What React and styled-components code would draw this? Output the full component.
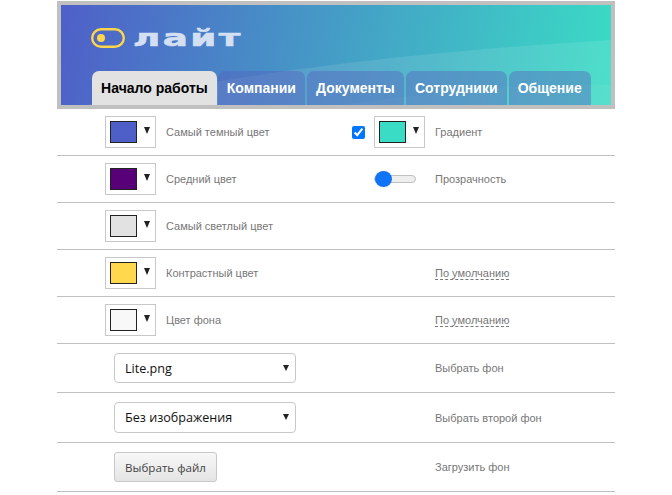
import React from 'react';
import styled, { createGlobalStyle } from 'styled-components';

const GlobalStyle = createGlobalStyle`
  html, body { margin: 0; padding: 0; background: #fff; }
  body { font-family: "Liberation Sans", Arial, sans-serif; }
`;

const Page = styled.div`
  width: 558px;
  margin: 1px auto 0;
`;

const Header = styled.header`
  position: relative;
  height: 100px;
  border: 4px solid #c0c0c0;
  background: linear-gradient(100deg, #4f5fc8 0%, #3adcc5 100%);
  display: flex;
  flex-direction: column;
  justify-content: space-between;
  overflow: hidden;
`;

const Waves = styled.svg`
  position: absolute;
  inset: 0;
  width: 100%;
  height: 100%;
`;

const Logo = styled.div`
  position: relative;
  display: flex;
  align-items: center;
  gap: 8px;
  padding: 23px 0 0 30px;
`;

const LogoText = styled.span`
  display: inline-block;
  font-family: "DejaVu Sans", sans-serif;
  font-weight: 700;
  font-size: 23px;
  line-height: 20px;
  letter-spacing: 1.5px;
  color: #d3dff2;
  -webkit-text-stroke: 0.6px #d3dff2;
  transform: scaleX(1.62);
  transform-origin: left center;
`;

const Tabs = styled.nav`
  position: relative;
  display: flex;
  gap: 2px;
  padding-left: 31px;
`;

const Tab = styled.div`
  height: 34px;
  padding: 0 9.1px;
  margin-right: ${p => (p.$active ? -1.2 : 0)}px;
  border-radius: 7px 7px 0 0;
  font-size: 14px;
  font-weight: 700;
  line-height: 34px;
  color: ${p => (p.$active ? '#000' : '#fff')};
  background: ${p => (p.$active ? '#e2e2e2' : 'rgba(86, 96, 190, 0.42)')};
`;

const Row = styled.div`
  display: grid;
  grid-template-columns: 295px 73px 1fr;
  align-items: center;
  height: ${p => p.$h || 46}px;
  border-bottom: 1px solid #c0c0c0;
`;

const Left = styled.div`
  display: flex;
  align-items: center;
  gap: 10px;
  padding-left: ${p => p.$inset || 48}px;
`;

const Middle = styled.div`
  display: flex;
  align-items: center;
  justify-content: space-between;
`;

const Label = styled.span`
  font-size: 11px;
  color: #777;
`;

const RightLabel = styled(Label)`
  margin-left: 10px;
`;

const DefaultLink = styled(RightLabel)`
  justify-self: start;
  border-bottom: 1px dashed #777;
  line-height: 12px;
`;

const Picker = styled.div`
  box-sizing: border-box;
  position: relative;
  width: 51px;
  height: 32px;
  border: 1px solid #c8c8c8;
  padding: 4px;
`;

const Swatch = styled.div`
  box-sizing: border-box;
  width: 27px;
  height: 22px;
  border: 1px solid #222;
  background: ${p => p.$color};
`;

const Arrow = styled.i`
  position: absolute;
  top: 10px;
  right: 5px;
  border-style: solid;
  border-width: 7px 3.5px 0;
  border-color: #222 transparent transparent;
`;

const Check = styled.input`
  width: 13px;
  height: 13px;
  margin: 0;
  accent-color: #0075ff;
`;

const Range = styled.input`
  appearance: none;
  width: 42px;
  height: 16px;
  margin: 0 0 0 22px;
  background: transparent;

  &::-webkit-slider-runnable-track {
    height: 8px;
    border: 1px solid #c0c0c0;
    border-radius: 5px;
    background: #eee;
  }
  &::-webkit-slider-thumb {
    appearance: none;
    width: 17px;
    height: 16px;
    margin-top: -5px;
    border-radius: 50%;
    background: #0f75f5;
  }
`;

const SelectWrap = styled.div`
  position: relative;
  width: 182px;

  &::after {
    content: '';
    position: absolute;
    top: 12px;
    right: 7px;
    border-style: solid;
    border-width: 6px 3px 0;
    border-color: #222 transparent transparent;
  }
`;

const Select = styled.select`
  box-sizing: border-box;
  display: block;
  appearance: none;
  width: 100%;
  height: ${p => p.$h}px;
  padding: 0 10px;
  border: 1px solid #c8c8c8;
  border-radius: 4px;
  background: #fff;
  font-family: "Open Sans", sans-serif;
  font-size: 12.6px;
  color: #111;
`;

const FileButton = styled.button`
  box-sizing: border-box;
  width: 103px;
  height: 30px;
  padding: 0;
  border: 1px solid #c8c8c8;
  border-radius: 3px;
  background: linear-gradient(#f8f8f8, #e4e4e4);
  font-family: "Open Sans", sans-serif;
  font-size: 11.6px;
  color: #444;
`;

const tabs = ['Начало работы', 'Компании', 'Документы', 'Сотрудники', 'Общение'];

const ColorPicker = ({ color }) => (
  <Picker>
    <Swatch $color={color} />
    <Arrow />
  </Picker>
);

export default function App() {
  return (
    <Page>
      <GlobalStyle />
      <Header>
        <Waves viewBox="0 0 550 100" preserveAspectRatio="none">
          <path d="M0 105 C150 75 300 50 550 35 L550 100 L0 100 Z" fill="#fff" opacity="0.1" />
          <path d="M280 100 C380 86 470 78 550 80 L550 100 Z" fill="#fff" opacity="0.05" />
        </Waves>
        <Logo>
          <svg width="34" height="20" viewBox="0 0 34 20">
            <rect x="1.2" y="1.2" width="31.6" height="17.6" rx="8.8" fill="none" stroke="#ffd54a" strokeWidth="2.4" />
            <circle cx="10" cy="10" r="4" fill="#ffd54a" />
          </svg>
          <LogoText>лайт</LogoText>
        </Logo>
        <Tabs>
          {tabs.map((t, i) => (
            <Tab key={t} $active={i === 0}>{t}</Tab>
          ))}
        </Tabs>
      </Header>

      <Row>
        <Left><ColorPicker color="#4f5fc8" /><Label>Самый темный цвет</Label></Left>
        <Middle><Check type="checkbox" defaultChecked /><ColorPicker color="#3adcc5" /></Middle>
        <RightLabel>Градиент</RightLabel>
      </Row>
      <Row>
        <Left><ColorPicker color="#570078" /><Label>Средний цвет</Label></Left>
        <Middle><Range type="range" min="0" max="100" defaultValue="0" /></Middle>
        <RightLabel>Прозрачность</RightLabel>
      </Row>
      <Row>
        <Left><ColorPicker color="#e2e2e2" /><Label>Самый светлый цвет</Label></Left>
      </Row>
      <Row>
        <Left><ColorPicker color="#ffd84d" /><Label>Контрастный цвет</Label></Left>
        <Middle />
        <DefaultLink>По умолчанию</DefaultLink>
      </Row>
      <Row>
        <Left><ColorPicker color="#f8f8f8" /><Label>Цвет фона</Label></Left>
        <Middle />
        <DefaultLink>По умолчанию</DefaultLink>
      </Row>
      <Row $h={48}>
        <Left $inset={57}>
          <SelectWrap><Select $h={30}><option>Lite.png</option></Select></SelectWrap>
        </Left>
        <Middle />
        <RightLabel>Выбрать фон</RightLabel>
      </Row>
      <Row $h={49}>
        <Left $inset={57}>
          <SelectWrap><Select $h={31}><option>Без изображения</option></Select></SelectWrap>
        </Left>
        <Middle />
        <RightLabel>Выбрать второй фон</RightLabel>
      </Row>
      <Row $h={48}>
        <Left $inset={57}><FileButton>Выбрать файл</FileButton></Left>
        <Middle />
        <RightLabel>Загрузить фон</RightLabel>
      </Row>
    </Page>
  );
}
